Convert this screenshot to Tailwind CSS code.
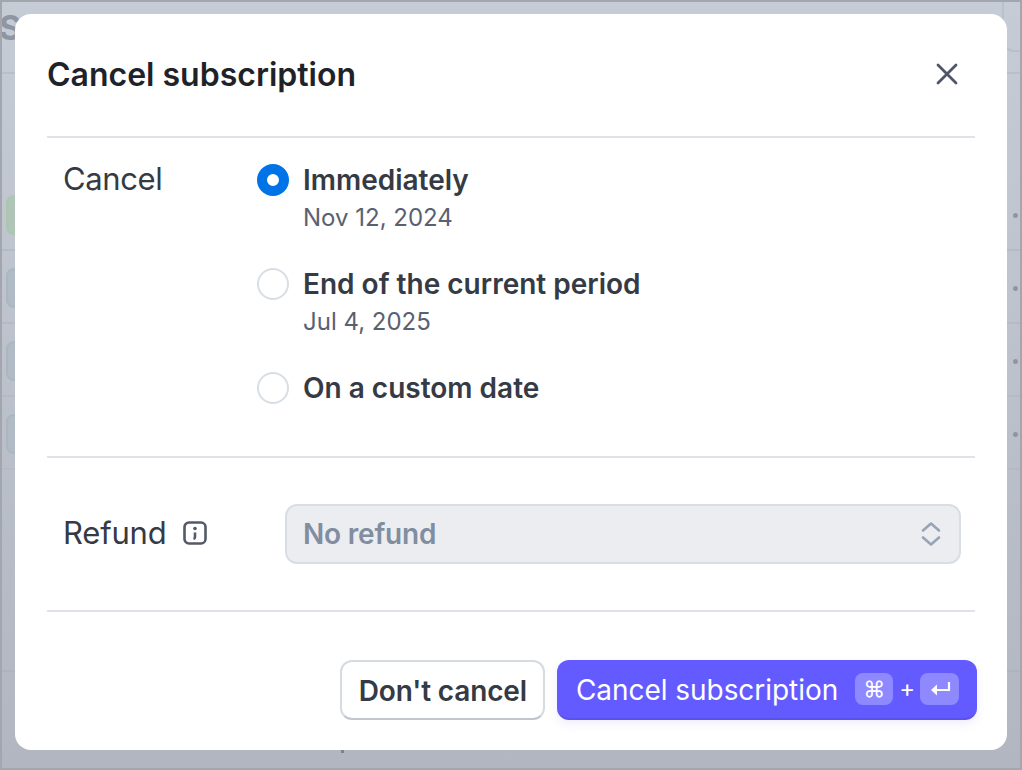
<!DOCTYPE html>
<html lang="en">
<head>
    <meta charset="UTF-8">
    <meta name="viewport" content="width=device-width, initial-scale=1.0">
    <title>Cancel subscription</title>
    <script src="https://cdn.jsdelivr.net/npm/@tailwindcss/browser@4"></script>
</head>
<body class="bg-[#bcc3ce] font-['Inter',sans-serif]">
    <div class="relative w-[1022px] h-[770px] overflow-hidden bg-gradient-to-b from-[#c6ccd6] to-[#b1b6c0] border-2 border-[#a3a6ac]">
        <!-- page behind the overlay -->
        <span class="absolute left-[-3px] top-[8px] text-[34px] leading-9 font-bold text-[#8f96a3]">S</span>
        <div class="absolute left-0 right-0 top-[70px] h-[2px] bg-[#b9bfca]"></div>
        <div class="absolute left-0 right-0 top-[247px] h-[2px] bg-[#b5bbc6]"></div>
        <div class="absolute left-0 right-0 top-[320px] h-[2px] bg-[#b5bbc6]"></div>
        <div class="absolute left-0 right-0 top-[393px] h-[2px] bg-[#b5bbc6]"></div>
        <div class="absolute left-0 right-0 top-[466px] h-[2px] bg-[#b5bbc6]"></div>
        <div class="absolute left-0 right-0 top-[668px] h-[2px] bg-[#aeb4be]"></div>
        <div class="absolute left-[4px] top-[193px] w-[20px] h-[40px] rounded-[8px] bg-[#b0c4b7] border-2 border-[#abc8ae]"></div>
        <div class="absolute left-[4px] top-[266px] w-[20px] h-[40px] rounded-[8px] bg-[#b1bbc6] border-2 border-[#acb6c1]"></div>
        <div class="absolute left-[4px] top-[339px] w-[20px] h-[40px] rounded-[8px] bg-[#b1bbc6] border-2 border-[#acb6c1]"></div>
        <div class="absolute left-[4px] top-[412px] w-[20px] h-[40px] rounded-[8px] bg-[#b1bbc6] border-2 border-[#acb6c1]"></div>
        <div class="absolute left-[1011px] top-[211px] w-[5px] h-[5px] rounded-full bg-[#8e96a5]"></div>
        <div class="absolute left-[1011px] top-[284px] w-[5px] h-[5px] rounded-full bg-[#8e96a5]"></div>
        <div class="absolute left-[1011px] top-[357px] w-[5px] h-[5px] rounded-full bg-[#8e96a5]"></div>
        <div class="absolute left-[1011px] top-[430px] w-[5px] h-[5px] rounded-full bg-[#8e96a5]"></div>
        <div class="absolute left-[1000px] top-[-10px] w-[40px] h-[60px] rounded-[12px] border-2 border-[#b9c0cb]"></div>
        <div class="absolute left-[339px] top-[748px] w-[3px] h-[3px] bg-[#7d838e]"></div>

        <!-- modal -->
        <div class="absolute left-[13px] top-[12px] w-[992px] h-[736px] bg-white rounded-[16px] px-[32px] flex flex-col">
            <div class="h-[124px] flex items-center justify-between border-b-2 border-[#dfe3e8] shrink-0">
                <h1 class="text-[32px] leading-9 font-semibold text-[#1f2329]">Cancel subscription</h1>
                <button class="w-[28px] h-[28px] mr-[14px] mb-[2px] flex items-center justify-center text-[#4f566b]">
                    <svg width="24" height="24" viewBox="0 0 24 24" fill="none" stroke="currentColor" stroke-width="2.8" stroke-linecap="round"><path d="M3 3l18 18M21 3L3 21"/></svg>
                </button>
            </div>

            <div class="h-[320px] flex border-b-2 border-[#dfe3e8] shrink-0 pl-[16px] pt-[21px]">
                <div class="w-[194px] text-[31px] leading-[40px] text-[#353a44] tracking-[-0.4px]">Cancel</div>
                <div class="flex flex-col mt-[1px]">
                    <div class="flex gap-[14px] h-[104px]">
                        <span class="w-[32px] h-[32px] mt-[4px] rounded-full border-[10px] border-[#0073e6] bg-white shrink-0"></span>
                        <div>
                            <div class="text-[28px] leading-[41px] font-semibold text-[#353a44]">Immediately</div>
                            <div class="text-[24px] leading-[33px] text-[#596171]">Nov 12, 2024</div>
                        </div>
                    </div>
                    <div class="flex gap-[14px] h-[104px]">
                        <span class="w-[32px] h-[32px] mt-[4px] rounded-full border-2 border-[#d8dee4] bg-white shrink-0"></span>
                        <div>
                            <div class="text-[28px] leading-[41px] font-semibold text-[#353a44]">End of the current period</div>
                            <div class="text-[24px] leading-[33px] text-[#596171]">Jul 4, 2025</div>
                        </div>
                    </div>
                    <div class="flex gap-[14px]">
                        <span class="w-[32px] h-[32px] mt-[4px] rounded-full border-2 border-[#d8dee4] bg-white shrink-0"></span>
                        <div class="text-[28px] leading-[41px] font-semibold text-[#353a44]">On a custom date</div>
                    </div>
                </div>
            </div>

            <div class="h-[154px] flex items-center justify-between border-b-2 border-[#dfe3e8] shrink-0 pl-[16px] pr-[14px]">
                <div class="flex items-center gap-[17px] mt-[-2px]">
                    <span class="text-[31px] leading-[40px] text-[#353a44] tracking-[-0.2px]">Refund</span>
                    <svg width="24" height="24" viewBox="0 0 24 24" fill="none" class="text-[#545969]">
                        <rect x="1.5" y="1.5" width="21" height="21" rx="4.5" stroke="currentColor" stroke-width="2.6"/>
                        <circle cx="12" cy="7.5" r="1.8" fill="currentColor"/>
                        <path d="M12 11.5v4.5q0 1.5-1.5 2" stroke="currentColor" stroke-width="2.6"/>
                    </svg>
                </div>
                <div class="w-[676px] h-[60px] rounded-[12px] bg-[#ecedf1] border-2 border-[#d8dee4] flex items-center justify-between pl-[16px] pr-[18px]">
                    <span class="text-[28px] leading-[40px] font-semibold text-[#818da0] tracking-[-0.2px]">No refund</span>
                    <svg width="20" height="26" viewBox="0 0 20 26" fill="none" stroke="#99a3b5" stroke-width="2.6" stroke-linecap="round" stroke-linejoin="round"><path d="M2 9.5l8-7 8 7M2 16.5l8 7 8-7"/></svg>
                </div>
            </div>

            <div class="flex justify-end items-start gap-[12px] pt-[48px] mr-[-2px]">
                <button class="h-[60px] pl-[17px] pr-[16px] pt-[2px] rounded-[12px] bg-white border-2 border-[#d5dbe1] border-b-[#c0c5cf] text-[28px] tracking-[-0.15px] font-semibold text-[#353a44] whitespace-nowrap">Don't cancel</button>
                <button class="h-[60px] pl-[19px] pr-[18px] rounded-[12px] bg-[#635bff] border-b-2 border-[#5a52ea] shadow-[0_4px_10px_rgba(99,91,255,0.1)] flex items-center text-[28px] tracking-[-0.05px] text-white whitespace-nowrap">
                    <span class="pt-[2px]">Cancel subscription</span>
                    <span class="ml-[17px] w-[38px] h-[32px] rounded-[8px] bg-[#8f89ff] flex items-center justify-center text-[22px] leading-none">⌘</span>
                    <span class="ml-[6px] mr-[5px] text-[24px] leading-none">+</span>
                    <span class="w-[39px] h-[32px] rounded-[8px] bg-[#8f89ff] flex items-center justify-center">
                        <svg width="22" height="16" viewBox="0 0 22 16" fill="none" stroke="white" stroke-width="2.2"><path d="M20 1v8H3"/><path d="M8 3.5L2 9l6 5.5V3.5z" fill="white" stroke="none"/></svg>
                    </span>
                </button>
            </div>
        </div>
    </div>
</body>
</html>
